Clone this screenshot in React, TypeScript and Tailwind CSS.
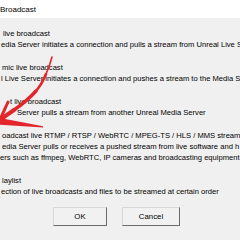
import type { ReactNode } from "react";

const font = { fontFamily: '"Liberation Sans", Arial, sans-serif' };

type Option = { label: string; labelPad: string; lines: { text: string; pad: string }[] };

const OPTIONS: Option[] = [
  {
    label: "live broadcast",
    labelPad: "pl-[3px]",
    lines: [{ text: "edia Server initiates a connection and pulls a stream from Unreal Live S", pad: "pl-[1px]" }],
  },
  {
    label: "mic live broadcast",
    labelPad: "pl-[2px]",
    lines: [{ text: "l Live Server initiates a connection and pushes a stream to the Media S", pad: "pl-[1px]" }],
  },
  {
    label: "t live broadcast",
    labelPad: "pl-[10px]",
    lines: [{ text: "Server pulls a stream from another Unreal Media Server", pad: "pl-[17px]" }],
  },
  {
    label: "oadcast live RTMP / RTSP / WebRTC / MPEG-TS / HLS / MMS stream",
    labelPad: "pl-[2px]",
    lines: [
      { text: "edia Server pulls or receives a pushed stream from live software and h", pad: "pl-[2px]" },
      { text: "ers such as ffmpeg, WebRTC, IP cameras and broadcasting equipment", pad: "pl-0" },
    ],
  },
  {
    label: "laylist",
    labelPad: "pl-[2px]",
    lines: [{ text: "ection of live broadcasts and files to be streamed at certain order", pad: "pl-[1px]" }],
  },
];

function Line({ pad, children }: { pad: string; children: ReactNode }) {
  return <div className={`${pad} h-[11px] leading-[11px] whitespace-nowrap`}>{children}</div>;
}

function Arrow() {
  return (
    <svg className="absolute left-0 top-0 pointer-events-none" width="240" height="240" viewBox="0 0 240 240">
      <g stroke="#e3262b" fill="none" strokeLinecap="round">
        <path d="M52 57 Q50 65 46 74" strokeWidth="1.6" />
        <path d="M46 74 Q42 84 36 91" strokeWidth="2.6" />
        <path d="M36 91 Q27 101 14 110" strokeWidth="3.4" />
        <path d="M14 110 L1 119" strokeWidth="4" />
        <path d="M-1 122 L8 102" strokeWidth="3" />
      </g>
      <path d="M-2 117.5 L43 126.2 L43 127.6 L-2 124.5 Z" fill="#e3262b" />
    </svg>
  );
}

export default function App() {
  return (
    <div className="relative w-[240px] h-[240px] overflow-hidden bg-[#f0f0f0] text-black" style={font}>
      <div className="h-[18px] pt-[1px] bg-white flex items-center text-[8px]">Broadcast</div>

      <div className="pt-[10px] flex flex-col gap-[12px] text-[7.6px]">
        {OPTIONS.map((o) => (
          <div key={o.label}>
            <Line pad={o.labelPad}>{o.label}</Line>
            {o.lines.map((l) => (
              <Line key={l.text} pad={l.pad}>{l.text}</Line>
            ))}
          </div>
        ))}
      </div>

      <div className="flex gap-[15px] pl-[53px] mt-[10px] text-[7.8px]">
        <button className="w-[54px] h-[19px] bg-[#f1f1f1] border border-t-[#d8d8d8] border-l-[#d8d8d8] border-r-[#6a6a6a] border-b-[#6a6a6a]">
          OK
        </button>
        <button className="w-[58px] h-[19px] bg-[#f1f1f1] border border-t-[#d8d8d8] border-l-[#d8d8d8] border-r-[#6a6a6a] border-b-[#6a6a6a]">
          Cancel
        </button>
      </div>

      <Arrow />
    </div>
  );
}
